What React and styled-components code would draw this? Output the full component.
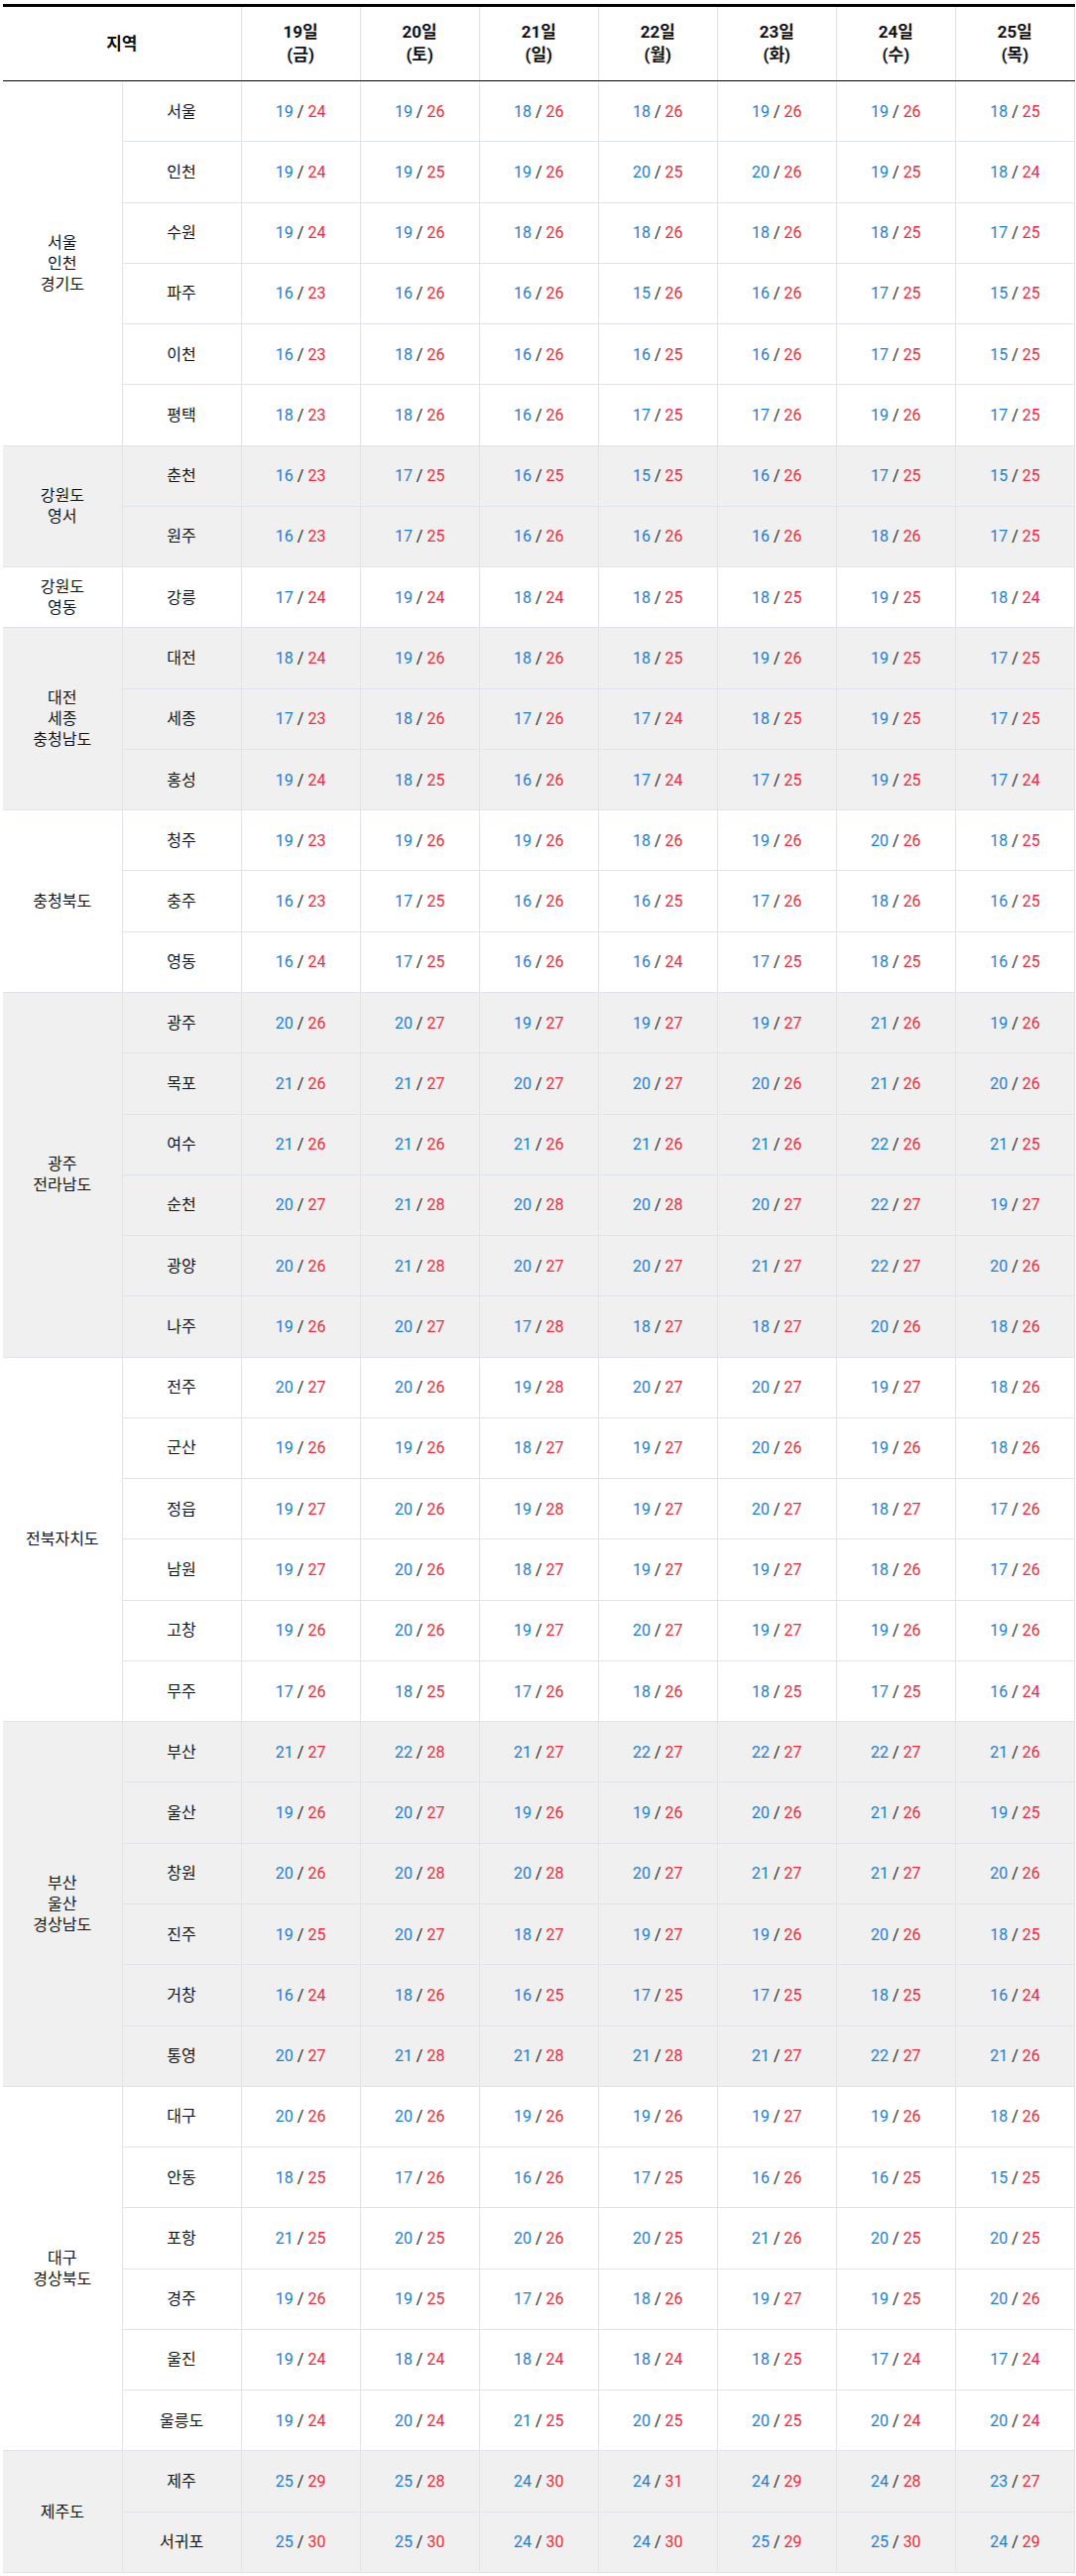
import React from 'react';
import styled, { createGlobalStyle } from 'styled-components';

const GlobalStyle = createGlobalStyle`
    body {
        margin: 0;
        background: #fff;
        font-family: Roboto, "Noto Sans CJK KR", "Noto Sans", sans-serif;
        color: #111;
    }
`;

const days = [
    ['19일', '금'], ['20일', '토'], ['21일', '일'], ['22일', '월'],
    ['23일', '화'], ['24일', '수'], ['25일', '목'],
];

// [min, max] per day, 19일 ~ 25일
const groups = [
    { name: ['서울', '인천', '경기도'], cities: [
        ['서울', '19/24 19/26 18/26 18/26 19/26 19/26 18/25'],
        ['인천', '19/24 19/25 19/26 20/25 20/26 19/25 18/24'],
        ['수원', '19/24 19/26 18/26 18/26 18/26 18/25 17/25'],
        ['파주', '16/23 16/26 16/26 15/26 16/26 17/25 15/25'],
        ['이천', '16/23 18/26 16/26 16/25 16/26 17/25 15/25'],
        ['평택', '18/23 18/26 16/26 17/25 17/26 19/26 17/25'],
    ] },
    { name: ['강원도', '영서'], cities: [
        ['춘천', '16/23 17/25 16/25 15/25 16/26 17/25 15/25'],
        ['원주', '16/23 17/25 16/26 16/26 16/26 18/26 17/25'],
    ] },
    { name: ['강원도', '영동'], cities: [
        ['강릉', '17/24 19/24 18/24 18/25 18/25 19/25 18/24'],
    ] },
    { name: ['대전', '세종', '충청남도'], cities: [
        ['대전', '18/24 19/26 18/26 18/25 19/26 19/25 17/25'],
        ['세종', '17/23 18/26 17/26 17/24 18/25 19/25 17/25'],
        ['홍성', '19/24 18/25 16/26 17/24 17/25 19/25 17/24'],
    ] },
    { name: ['충청북도'], cities: [
        ['청주', '19/23 19/26 19/26 18/26 19/26 20/26 18/25'],
        ['충주', '16/23 17/25 16/26 16/25 17/26 18/26 16/25'],
        ['영동', '16/24 17/25 16/26 16/24 17/25 18/25 16/25'],
    ] },
    { name: ['광주', '전라남도'], cities: [
        ['광주', '20/26 20/27 19/27 19/27 19/27 21/26 19/26'],
        ['목포', '21/26 21/27 20/27 20/27 20/26 21/26 20/26'],
        ['여수', '21/26 21/26 21/26 21/26 21/26 22/26 21/25'],
        ['순천', '20/27 21/28 20/28 20/28 20/27 22/27 19/27'],
        ['광양', '20/26 21/28 20/27 20/27 21/27 22/27 20/26'],
        ['나주', '19/26 20/27 17/28 18/27 18/27 20/26 18/26'],
    ] },
    { name: ['전북자치도'], cities: [
        ['전주', '20/27 20/26 19/28 20/27 20/27 19/27 18/26'],
        ['군산', '19/26 19/26 18/27 19/27 20/26 19/26 18/26'],
        ['정읍', '19/27 20/26 19/28 19/27 20/27 18/27 17/26'],
        ['남원', '19/27 20/26 18/27 19/27 19/27 18/26 17/26'],
        ['고창', '19/26 20/26 19/27 20/27 19/27 19/26 19/26'],
        ['무주', '17/26 18/25 17/26 18/26 18/25 17/25 16/24'],
    ] },
    { name: ['부산', '울산', '경상남도'], cities: [
        ['부산', '21/27 22/28 21/27 22/27 22/27 22/27 21/26'],
        ['울산', '19/26 20/27 19/26 19/26 20/26 21/26 19/25'],
        ['창원', '20/26 20/28 20/28 20/27 21/27 21/27 20/26'],
        ['진주', '19/25 20/27 18/27 19/27 19/26 20/26 18/25'],
        ['거창', '16/24 18/26 16/25 17/25 17/25 18/25 16/24'],
        ['통영', '20/27 21/28 21/28 21/28 21/27 22/27 21/26'],
    ] },
    { name: ['대구', '경상북도'], cities: [
        ['대구', '20/26 20/26 19/26 19/26 19/27 19/26 18/26'],
        ['안동', '18/25 17/26 16/26 17/25 16/26 16/25 15/25'],
        ['포항', '21/25 20/25 20/26 20/25 21/26 20/25 20/25'],
        ['경주', '19/26 19/25 17/26 18/26 19/27 19/25 20/26'],
        ['울진', '19/24 18/24 18/24 18/24 18/25 17/24 17/24'],
        ['울릉도', '19/24 20/24 21/25 20/25 20/25 20/24 20/24'],
    ] },
    { name: ['제주도'], cities: [
        ['제주', '25/29 25/28 24/30 24/31 24/29 24/28 23/27'],
        ['서귀포', '25/30 25/30 24/30 24/30 25/29 25/30 24/29'],
    ] },
];

const Wrap = styled.div`
    padding: 4px 0 0 3px;
`;

const Table = styled.table`
    width: 1081px;
    border-collapse: collapse;
    table-layout: fixed;
    border-top: 3px solid #000;
`;

const HeadCell = styled.th`
    height: 74px;
    padding: 0;
    font-size: 17px;
    font-weight: 700;
    line-height: 23px;
    color: #111;
    text-align: center;
    vertical-align: middle;
    border-bottom: 1px solid #000;
    border-left: ${props => props.first ? 'none' : '1px solid #dfe3ea'};
    border-right: ${props => props.last ? '1px solid #dfe3ea' : 'none'};
`;

const Row = styled.tr`
    background: ${props => props.shaded ? '#f0f0f0' : '#fff'};
`;

const Cell = styled.td`
    height: 60.27px;
    padding: 0;
    font-size: 16px;
    line-height: 21px;
    text-align: center;
    vertical-align: middle;
    color: #111;
    border-bottom: 1px solid #dfe3ea;
    border-left: ${props => props.region ? 'none' : '1px solid #dfe3ea'};
    border-right: ${props => props.last ? '1px solid #dfe3ea' : 'none'};
`;

const Low = styled.span`
    color: #1a7fd0;
`;

const High = styled.span`
    color: #f3283c;
`;

const Slash = styled.span`
    color: #222;
`;

function Temp({ value }) {
    let [min, max] = value.split('/');
    return (
        <>
            <Low>{min}</Low> <Slash>/</Slash> <High>{max}</High>
        </>
    );
}

function App() {
    return (
        <Wrap>
            <GlobalStyle />
            <Table>
                <colgroup>
                    <col style={{ width: 120 }} />
                    <col style={{ width: 120 }} />
                    {days.map(d => <col key={d[0]} style={{ width: 120 }} />)}
                </colgroup>
                <thead>
                    <tr>
                        <HeadCell colSpan={2} first>지역</HeadCell>
                        {days.map((d, i) => (
                            <HeadCell key={d[0]} last={i === days.length - 1}>
                                {d[0]}<br />({d[1]})
                            </HeadCell>
                        ))}
                    </tr>
                </thead>
                <tbody>
                    {groups.map((g, gi) =>
                        g.cities.map((c, ci) => (
                            <Row key={c[0] + gi} shaded={gi % 2 === 1}>
                                {ci === 0 ? (
                                    <Cell region rowSpan={g.cities.length}>
                                        {g.name.map((n, ni) => <div key={ni}>{n}</div>)}
                                    </Cell>
                                ) : null}
                                <Cell>{c[0]}</Cell>
                                {c[1].split(' ').map((v, vi, arr) => (
                                    <Cell key={vi} last={vi === arr.length - 1}>
                                        <Temp value={v} />
                                    </Cell>
                                ))}
                            </Row>
                        ))
                    )}
                </tbody>
            </Table>
        </Wrap>
    );
}

export default App;
